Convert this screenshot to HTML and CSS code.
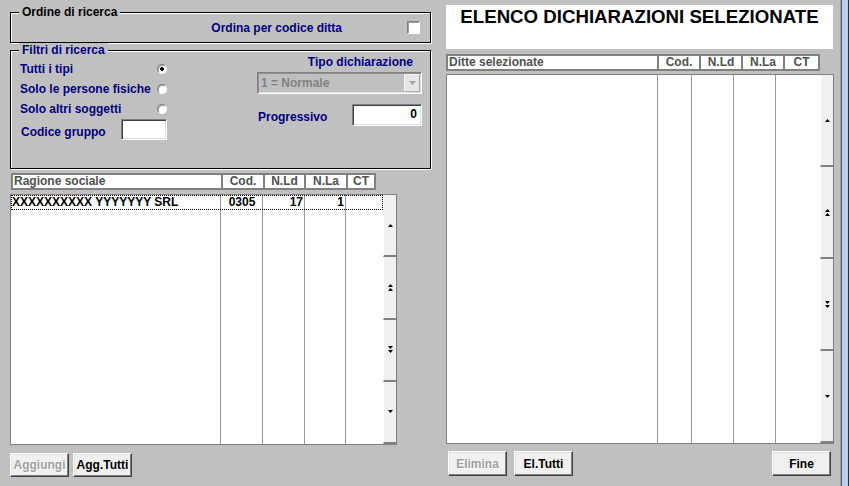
FILE: index.html
```html
<!doctype html>
<html lang="it">
<head>
	<meta charset="utf-8" />
	<title>Elenco dichiarazioni</title>
	<link rel="stylesheet" href="styles.css">
</head>
<body>
	<div class="window">
		<!-- colonna sinistra: filtri e ditte -->
		<div class="left">
			<div class="group group-order">
				<span class="group-title">Ordine di ricerca</span>
				<div class="order-row">
					<span>Ordina per codice ditta</span>
					<span class="check"></span>
				</div>
			</div>
			<div class="group group-filters">
				<span class="group-title blue">Filtri di ricerca</span>
				<div class="filters">
					<div class="filter-left">
						<div class="opt"><span>Tutti i tipi</span><span class="radio on"></span></div>
						<div class="opt"><span>Solo le persone fisiche</span><span class="radio"></span></div>
						<div class="opt"><span>Solo altri soggetti</span><span class="radio"></span></div>
						<div class="code-row"><span>Codice gruppo</span><span class="field code"></span></div>
					</div>
					<div class="filter-right">
						<div class="tipo-label">Tipo dichiarazione</div>
						<div class="combo">
							<span>1 = Normale</span>
							<span class="combo-btn"><svg width="7" height="4" viewBox="0 0 7 4"><path d="M0 0H7L3.5 4Z" fill="#a0a0a0"/></svg></span>
						</div>
						<div class="prog-row"><span>Progressivo</span><span class="field prog">0</span></div>
					</div>
				</div>
			</div>
			<div class="head head-left">
				<span>Ragione sociale</span><span>Cod.</span><span>N.Ld</span><span>N.La</span><span>CT</span>
			</div>
			<div class="list list-left">
				<div class="list-area">
					<div class="row">
						<span>XXXXXXXXXX YYYYYYY SRL</span><span class="c-cod">0305</span><span class="c-num">17</span><span class="c-num">1</span><span></span>
					</div>
				</div>
				<div class="scroller">
					<span><svg width="5" height="3" viewBox="0 0 5 3"><path d="M2.5 0L5 3H0Z"/></svg></span>
					<span><svg width="5" height="7" viewBox="0 0 5 7"><path d="M2.5 0L5 3H0Z M2.5 4L5 7H0Z"/></svg></span>
					<span><svg width="5" height="7" viewBox="0 0 5 7"><path d="M0 0H5L2.5 3Z M0 4H5L2.5 7Z"/></svg></span>
					<span><svg width="5" height="3" viewBox="0 0 5 3"><path d="M0 0H5L2.5 3Z"/></svg></span>
				</div>
			</div>
			<div class="buttons">
				<button class="btn disabled">Aggiungi</button>
				<button class="btn">Agg.Tutti</button>
			</div>
		</div>

		<!-- colonna destra: ditte selezionate -->
		<div class="right">
			<div class="title-box">ELENCO DICHIARAZIONI SELEZIONATE</div>
			<div class="head head-right">
				<span>Ditte selezionate</span><span>Cod.</span><span>N.Ld</span><span>N.La</span><span>CT</span>
			</div>
			<div class="list list-right">
				<div class="list-area"></div>
				<div class="scroller">
					<span><svg width="5" height="3" viewBox="0 0 5 3"><path d="M2.5 0L5 3H0Z"/></svg></span>
					<span><svg width="5" height="7" viewBox="0 0 5 7"><path d="M2.5 0L5 3H0Z M2.5 4L5 7H0Z"/></svg></span>
					<span><svg width="5" height="7" viewBox="0 0 5 7"><path d="M0 0H5L2.5 3Z M0 4H5L2.5 7Z"/></svg></span>
					<span><svg width="5" height="3" viewBox="0 0 5 3"><path d="M0 0H5L2.5 3Z"/></svg></span>
				</div>
			</div>
			<div class="buttons buttons-right">
				<button class="btn disabled">Elimina</button>
				<button class="btn">El.Tutti</button>
				<button class="btn fine">Fine</button>
			</div>
		</div>

		<div class="edge"></div>
	</div>
</body>
</html>
```

FILE: styles.css
```css
* {
	box-sizing: border-box;
}
body {
	margin: 0;
	background: #c0c0c0;
	font: bold 12px "Liberation Sans", Arial, sans-serif;
	color: #000;
}
.window {
	display: flex;
	height: 486px;
	overflow: hidden;
}
.left {
	width: 421px;
	margin-left: 10px;
}
.right {
	width: 388px;
	margin-left: 15px;
}
.edge {
	width: 9px;
	margin-left: auto;
	background: linear-gradient(90deg, #9a9a9a 0 1px, #56606c 1px 2px, #b7cfe6 2px 8px, #26313d 8px);
}

/* riquadri */
.group {
	border: 1px solid #000;
	box-shadow: inset 1px 1px 0 #fff, 1px 1px 0 #fff;
}
.group-order {
	margin-top: 12px;
	height: 31px;
}
.group-filters {
	margin-top: 7px;
	height: 119px;
}
.group-title {
	display: block;
	width: fit-content;
	margin: -8px 0 0 8px;
	padding: 0 3px;
	line-height: 14px;
	background: #c0c0c0;
}
.blue,
.order-row,
.filters {
	color: #000080;
}
.order-row {
	display: flex;
	align-items: center;
	justify-content: flex-end;
	height: 13px;
	margin-top: 2px;
	padding-right: 10px;
}
.check {
	width: 13px;
	height: 13px;
	margin-left: 65px;
	background: #fff;
	border: 1px solid;
	border-color: #808080 #fff #fff #808080;
	box-shadow: inset 1px 1px 0 #a0a0a0;
}
.filters {
	display: flex;
	justify-content: space-between;
	padding: 0 8px 0 9px;
}
.filter-left {
	width: 147px;
	padding-top: 2px;
}
.opt {
	display: flex;
	align-items: center;
	justify-content: space-between;
	height: 20px;
}
.radio {
	width: 10px;
	height: 10px;
	border-radius: 50%;
	background: #fff;
	border: 1px solid;
	border-color: #808080 #fff #fff #808080;
	box-shadow: inset 1px 1px 0 #a0a0a0;
}
.radio.on {
	background: radial-gradient(circle, #000 0 1.6px, #fff 2.2px);
}
.code-row {
	display: flex;
	align-items: center;
	justify-content: space-between;
	height: 21px;
	padding-left: 1px;
}
.code-row span:first-child {
	padding-top: 4px;
}
.field {
	background: #fff;
	border: 1px solid;
	border-color: #808080 #fff #fff #808080;
	box-shadow: inset 1px 1px 0 #404040, inset -1px -1px 0 #dfdfdf;
}
.code {
	width: 46px;
	height: 21px;
}
.filter-right {
	width: 165px;
}
.tipo-label {
	margin-top: -2px;
	padding-right: 9px;
	line-height: 14px;
	text-align: right;
}
.combo {
	display: flex;
	align-items: center;
	justify-content: space-between;
	height: 22px;
	margin-top: 3px;
	padding: 0 1px 0 3px;
	color: #808080;
	border: 1px solid;
	border-color: #808080 #fff #fff #808080;
	box-shadow: inset 1px 1px 0 #909090, inset -1px -1px 0 #dfdfdf;
}
.combo-btn {
	display: flex;
	align-items: center;
	justify-content: center;
	width: 16px;
	height: 18px;
	background: #e6e6e6;
	border: 1px solid;
	border-color: #f4f4f4 #a8a8a8 #a8a8a8 #f4f4f4;
}
.prog-row {
	display: flex;
	align-items: center;
	justify-content: space-between;
	margin-top: 10px;
	padding-left: 1px;
}
.prog-row span:first-child {
	padding-top: 4px;
}
.prog {
	width: 70px;
	height: 22px;
	padding: 0 4px;
	line-height: 19px;
	text-align: right;
	color: #000;
}

/* griglie */
.head {
	display: flex;
	height: 17px;
	background: #fff;
	border: 2px solid #808080;
	color: #505050;
	line-height: 13px;
}
.head span {
	border-left: 2px solid #808080;
	text-align: center;
}
.head span:first-child {
	border-left: 0;
	padding-left: 1px;
	text-align: left;
}
.head-left {
	width: 365px;
	margin: 4px 0 0 1px;
}
.head-left span:nth-child(1) { width: 208px; }
.head-left span:nth-child(2) { width: 42px; }
.head-left span:nth-child(3) { width: 41px; }
.head-left span:nth-child(4) { width: 42px; }
.head-left span:nth-child(5) { width: 28px; }
.head-right {
	width: 374px;
	margin-top: 5px;
}
.head-right span:nth-child(1) { width: 209px; }
.head-right span:nth-child(2) { width: 42px; }
.head-right span:nth-child(3) { width: 42px; }
.head-right span:nth-child(4) { width: 42px; }
.head-right span:nth-child(5) { width: 35px; }
.list {
	display: flex;
	background: #fff;
	border: 1px solid #808080;
}
.list-left {
	width: 387px;
	height: 251px;
	margin-top: 4px;
}
.list-right {
	width: 388px;
	height: 370px;
	margin-top: 3px;
}
.list-area {
	flex: 1;
	background-repeat: no-repeat;
	background-size: 1px 100%;
}
.list-left .list-area {
	background-image: linear-gradient(#999, #999), linear-gradient(#999, #999), linear-gradient(#999, #999), linear-gradient(#999, #999);
	background-position: 209px 0, 251px 0, 293px 0, 334px 0;
}
.list-right .list-area {
	background-image: linear-gradient(#999, #999), linear-gradient(#999, #999), linear-gradient(#999, #999), linear-gradient(#999, #999);
	background-position: 210px 0, 244px 0, 286px 0, 328px 0;
}
.row {
	display: grid;
	grid-template-columns: 209px 42px 42px 41px 1fr;
	height: 15px;
	border: 1px dotted #000;
	line-height: 13px;
}
.c-cod {
	text-align: center;
}
.c-num {
	padding-right: 2px;
	text-align: right;
}
.scroller {
	display: flex;
	flex-direction: column;
	width: 13px;
}
.scroller span {
	flex: 1;
	display: flex;
	align-items: center;
	justify-content: center;
	background: #f0f0f0;
	border-left: 1px solid #fff;
	border-bottom: 2px solid #808080;
}

/* pulsanti */
.buttons {
	display: flex;
	gap: 4px;
	margin-top: 8px;
}
.buttons-right {
	gap: 7px;
	margin-top: 7px;
	padding-left: 2px;
}
.btn {
	width: 59px;
	height: 24px;
	padding: 0;
	background: #f0f0f0;
	border: 1px solid;
	border-color: #fff #404040 #404040 #fff;
	box-shadow: inset -1px -1px 0 #808080, inset 1px 1px 0 #e4e4e4;
	font: bold 12px "Liberation Sans", Arial, sans-serif;
	color: #000;
}
.buttons-right .btn {
	height: 25px;
}
.btn.disabled {
	color: #a0a0a0;
	text-shadow: 1px 1px 0 #fff;
}
.fine {
	margin: 0 3px 0 auto;
}

.title-box {
	width: 387px;
	height: 44px;
	margin-top: 5px;
	padding-top: 2px;
	background: #fff;
	text-align: center;
	font: bold 14pt "Liberation Sans", Arial, sans-serif;
	line-height: 20px;
}
```
